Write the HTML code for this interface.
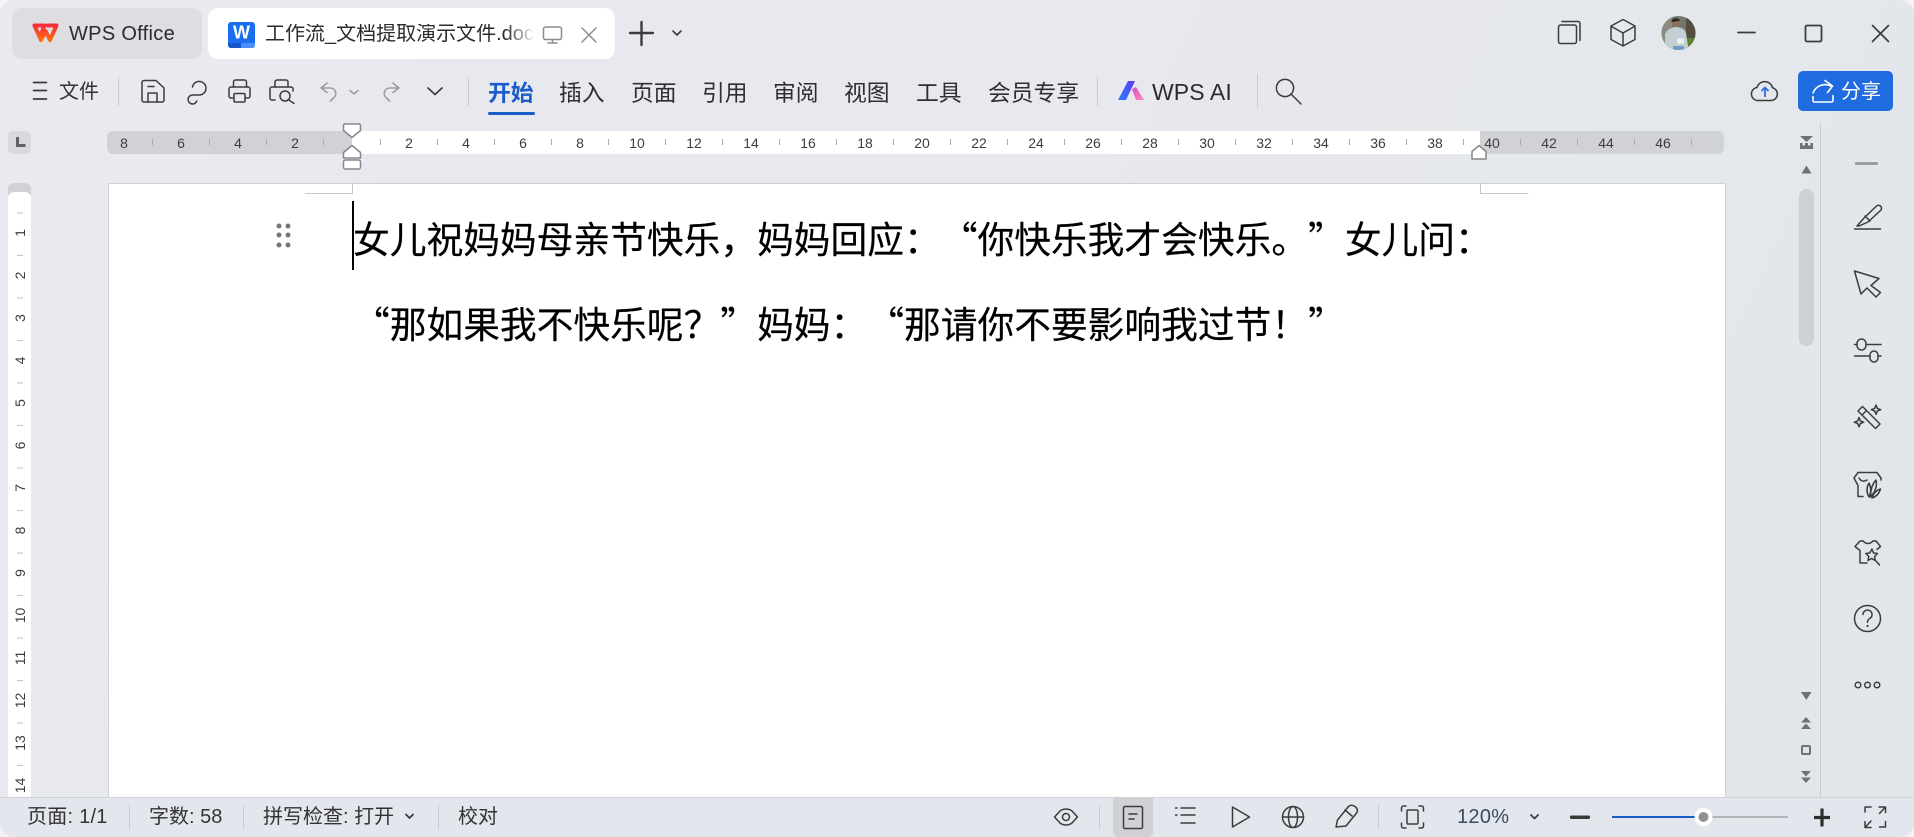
<!DOCTYPE html>
<html lang="zh-CN">
<head>
<meta charset="utf-8">
<title>工作流_文档提取演示文件.docx</title>
<style>
html,body{margin:0;padding:0;width:1914px;height:837px;overflow:hidden;background:#f3f3f5}
#w{position:absolute;left:0;top:0;width:1914px;height:837px;border-radius:14px;overflow:hidden;background:linear-gradient(115deg,#e9e9ef 0%,#e8e9ee 45%,#e1e6ea 100%);font-family:"Liberation Sans","Noto Sans CJK SC",sans-serif;color:#333}
.a{position:absolute}
.t{position:absolute;white-space:nowrap;line-height:1;font-size:20px;color:#333}
.m{font-size:22.8px;color:#2f2f2f}
.doc{position:absolute;left:353px;white-space:pre;font-family:"Noto Sans CJK SC",sans-serif;font-size:36.74px;line-height:1;color:#000;text-spacing-trim:space-all;-webkit-text-stroke:.2px #000}
.s{position:absolute;width:1px;background:#c9cacf}
svg{position:absolute;left:0;top:0}
</style>
</head>
<body>
<div id="w">
  <!-- tabs -->
  <div class="a" style="left:12px;top:8px;width:190px;height:51px;border-radius:10px;background:#dddde2"></div>
  <div class="a" style="left:208px;top:8px;width:407px;height:51px;border-radius:10px;background:#fff"></div>
  <div class="t" style="left:69px;top:24px;font-size:20px;letter-spacing:.3px;color:#2b2b2b">WPS Office</div>
  <div class="t" style="left:265px;top:24px;color:#2b2b2b;width:269px;overflow:hidden">工作流_文档提取演示文件.docx</div>
  <div class="a" style="left:505px;top:20px;width:30px;height:30px;background:linear-gradient(90deg,rgba(255,255,255,0),#fff)"></div>

  <!-- ribbon text -->
  <div class="t" style="left:59px;top:82px">文件</div>
  <div class="t m" style="left:488px;top:82px;color:#1a5cc8;font-weight:700">开始</div>
  <div class="a" style="left:488px;top:112px;width:47px;height:3px;border-radius:2px;background:#1a5cc8"></div>
  <div class="t m" style="left:559px;top:82px">插入</div>
  <div class="t m" style="left:631px;top:82px">页面</div>
  <div class="t m" style="left:702px;top:82px">引用</div>
  <div class="t m" style="left:773px;top:82px">审阅</div>
  <div class="t m" style="left:844px;top:82px">视图</div>
  <div class="t m" style="left:916px;top:82px">工具</div>
  <div class="t m" style="left:988px;top:82px">会员专享</div>
  <div class="t" style="left:1152px;top:81px;font-size:23px;letter-spacing:.1px;color:#2b2b2b">WPS AI</div>
  <div class="s" style="left:118px;top:77px;height:29px"></div>
  <div class="s" style="left:468px;top:77px;height:29px"></div>
  <div class="s" style="left:1097px;top:77px;height:29px"></div>
  <div class="s" style="left:1257px;top:74px;height:34px"></div>

  <div class="a" style="left:1798px;top:71px;width:95px;height:40px;border-radius:5px;background:#1f6be0"></div>
  <div class="t" style="left:1841px;top:82px;color:#fff">分享</div>

  <!-- rulers -->
  <div class="a" style="left:8px;top:131px;width:23px;height:23px;border-radius:5px;background:#d8d9dc"></div>
  <div class="a" style="left:107px;top:131px;width:1617px;height:23px;border-radius:6px;background:#d1d2d6"></div>
  <div class="a" style="left:352px;top:131px;width:1128px;height:23px;background:#fff"></div>
  <div class="a" style="left:8px;top:183px;width:23px;height:40px;border-radius:6px 6px 0 0;background:#d1d2d6"></div>
  <div class="a" style="left:8px;top:192px;width:23px;height:605px;border-radius:6px 6px 0 0;background:#fff"></div>

  <!-- page -->
  <div class="a" style="left:108px;top:183px;width:1618px;height:614px;background:#fff;border:1px solid #cfd1d5;border-bottom:0;box-sizing:border-box"></div>
  <div class="doc" style="top:219px">女儿祝妈妈母亲节快乐，妈妈回应：“你快乐我才会快乐。”女儿问：</div>
  <div class="doc" style="top:304px">“那如果我不快乐呢？”妈妈：“那请你不要影响我过节！”</div>
  <div class="a" style="left:352px;top:201px;width:2px;height:69px;background:#000"></div>

  <!-- right panel sep, scrollbar -->
  <div class="s" style="left:1820px;top:123px;height:674px;background:#c8cbd0"></div>
  <div class="a" style="left:1799px;top:189px;width:15px;height:157px;border-radius:8px;background:#cdd0d4"></div>

  <!-- status bar -->
  <div class="a" style="left:0;top:797px;width:1914px;height:40px;background:#e3e6ec;border-top:1px solid #cfd2d7;box-sizing:border-box"></div>
  <div class="a" style="left:1113px;top:797px;width:40px;height:40px;border-radius:0 0 5px 5px;background:#cfd1d5"></div>
  <div class="t" style="left:27px;top:807px;letter-spacing:.25px">页面: 1/1</div>
  <div class="t" style="left:149px;top:807px">字数: 58</div>
  <div class="t" style="left:263px;top:807px">拼写检查: 打开</div>
  <div class="t" style="left:458px;top:807px">校对</div>
  <div class="t" style="left:1457px;top:807px;color:#3d4b60;letter-spacing:.3px">120%</div>
  <div class="s" style="left:129px;top:805px;height:24px"></div>
  <div class="s" style="left:243px;top:805px;height:24px"></div>
  <div class="s" style="left:438px;top:805px;height:24px"></div>
  <div class="s" style="left:1099px;top:805px;height:24px"></div>
  <div class="s" style="left:1378px;top:805px;height:24px"></div>

  <svg width="1914" height="837" viewBox="0 0 1914 837" xmlns="http://www.w3.org/2000/svg">
    <defs>
      <linearGradient id="wg" x1="0" y1="0" x2="0" y2="1"><stop offset="0" stop-color="#f5303a"/><stop offset="1" stop-color="#ff6a10"/></linearGradient>
      <linearGradient id="aig" x1="0" y1="1" x2="1" y2="0"><stop offset="0" stop-color="#2f7bff"/><stop offset="1" stop-color="#5a3df0"/></linearGradient>
      <linearGradient id="aip" x1="0" y1="0" x2="1" y2="1"><stop offset="0" stop-color="#d84ad8"/><stop offset="1" stop-color="#ff8fa8"/></linearGradient>
      <clipPath id="av"><circle cx="1678.500" cy="33" r="17"/></clipPath>
    </defs>

    <!-- WPS logo -->
    <path d="M34.500 25.500H44.500L41 34M34.500 25.500L41 40L45.500 31L50 40L56.500 25.500H47.500" fill="none" stroke="url(#wg)" stroke-width="4" stroke-linejoin="round" stroke-linecap="round"/>
    <!-- W icon -->
    <rect x="228" y="22" width="27" height="26" rx="3" fill="#1a6ef0"/>
    <path d="M228 43h27v2a3 3 0 0 1-3 3h-21a3 3 0 0 1-3-3z" fill="#1559c9"/>
    <path d="M241 43h14v2a3 3 0 0 1-3 3h-11z" fill="#4a8ff5"/>
    <text x="241.500" y="38.500" text-anchor="middle" font-family="Liberation Sans" font-weight="700" font-size="18" fill="#fff">W</text>

    <g fill="none" stroke="#8c8c8c" stroke-width="1.500" stroke-linecap="round">
      <rect x="543.500" y="27" width="18" height="12.500" rx="2"/>
      <path d="M552.500 39.500v3M548 43h9"/>
      <path d="M582 28L596 42M596 28L582 42"/>
    </g>

    <g fill="none" stroke="#3c3c3c" stroke-width="1.500" stroke-linecap="round" stroke-linejoin="round">
      <path d="M630 33h23M641.500 22v23" stroke-width="2.400"/>
      <path d="M673 31l4 4 4-4" stroke-width="1.600"/>
      <path d="M33.500 82.500h13M33.500 90.500h13M33.500 99h13" stroke-width="1.700"/>
      <!-- save -->
      <path d="M144 80.500h12l8 7.500v12a2 2 0 0 1-2 2h-18a2 2 0 0 1-2-2v-17.500a2 2 0 0 1 2-2z"/>
      <path d="M148 102v-9h9v9M148 86.500h6"/>
      <!-- p -->
      <path d="M192.500 87a6.800 6.800 0 1 1 6.800 8h-7a4.500 4.500 0 1 0 4.500 6"/>
      <!-- print -->
      <path d="M233.500 87v-5a2 2 0 0 1 2-2h9a2 2 0 0 1 2 2v5"/>
      <path d="M234 98h-3a2 2 0 0 1-2-2v-7a2 2 0 0 1 2-2h17a2 2 0 0 1 2 2v7a2 2 0 0 1-2 2h-3"/>
      <rect x="234" y="93.500" width="11" height="8.500" rx="1"/>
      <!-- preview -->
      <path d="M275 87v-5a2 2 0 0 1 2-2h9a2 2 0 0 1 2 2v5"/>
      <path d="M275 100h-3a2 2 0 0 1-2-2v-9a2 2 0 0 1 2-2h19a2 2 0 0 1 2 2v2"/>
      <circle cx="285" cy="96" r="5"/>
      <path d="M289 100l5 3.500"/>
      <!-- more chevron -->
      <path d="M428 88l7 6.500 7-6.500" stroke-width="1.700"/>
      <!-- search -->
      <circle cx="1285" cy="88" r="8.600"/>
      <path d="M1291.500 94.500L1301 104"/>
      <!-- win -->
      <rect x="1558.500" y="25" width="18" height="18.500" rx="2"/>
      <path d="M1562 21.500h16a2 2 0 0 1 2 2v17"/>
      <path d="M1623 19.500L1635 26V39.500L1623 46L1611 39.500V26zM1611.500 26.500L1623 33L1634.500 26.500M1623 33V46"/>
      <path d="M1738 32.500h17" stroke-width="1.700"/>
      <rect x="1805.500" y="25.500" width="16" height="16" rx="1.500" stroke-width="1.800"/>
      <path d="M1872.500 25.500L1888.500 41.500M1888.500 25.500L1872.500 41.500" stroke-width="1.700"/>
      <!-- cloud -->
      <path d="M1759 100.500h12a6.500 6.500 0 0 0 1.500-12.800a8 8 0 0 0-15.500-.2a6.500 6.500 0 0 0 2 13z"/>
    </g>
    <path d="M1765 97v-9M1761.500 91l3.500-3.500 3.500 3.500" fill="none" stroke="#2a6ee0" stroke-width="1.800"/>
    <g fill="none" stroke="#fff" stroke-width="1.600" stroke-linecap="round" stroke-linejoin="round">
      <path d="M1813 93a13 13 0 0 1 18-7M1825 80.500l7.500 5.500-5 6.500"/>
      <path d="M1813 96.500v4a1.500 1.500 0 0 0 1.500 1.500h17a1.500 1.500 0 0 0 1.500-1.500v-5"/>
    </g>
    <!-- undo / redo -->
    <g fill="none" stroke="#9d9d9f" stroke-width="1.600" stroke-linecap="round" stroke-linejoin="round">
      <path d="M327 83l-6 5 6 4.500M321.500 88h9a5.500 5.500 0 0 1 3 10l-3 3"/>
      <path d="M350 90.500l4 3.500 4-3.500" stroke-width="1.500"/>
      <path d="M393 83l6 5-6 4.500M398.500 88h-9a5.500 5.500 0 0 0-3 10l3 3"/>
    </g>

    <!-- AI logo -->
    <polygon points="1118,100 1128,81 1135,81 1126,100" fill="url(#aig)"/>
    <polygon points="1132,89 1136,87 1144,100 1136,100" fill="url(#aip)"/>

    <!-- avatar -->
    <g clip-path="url(#av)">
      <rect x="1660" y="14" width="38" height="38" fill="#75766a"/>
      <rect x="1660" y="14" width="12" height="38" fill="#8d8a80"/>
      <rect x="1686" y="16" width="12" height="22" fill="#554c40"/>
      <rect x="1686" y="38" width="12" height="14" fill="#5d7f32"/>
      <path d="M1665 52V34q3-6 10-7 9 0 11 6l3 19z" fill="#c3ced0"/>
      <circle cx="1675.500" cy="22.500" r="3.800" fill="#8f7058"/>
      <path d="M1671 21q4-5 9-1l-1 1-7 1z" fill="#2d2723"/>
      <rect x="1673" y="46" width="11" height="6" fill="#6f9cc4"/>
      <rect x="1677" y="38.500" width="7" height="5" fill="#f0f0f0"/>
    </g>

    <!-- ruler corner -->
    <path d="M17.500 137v8.500h8" fill="none" stroke="#5f6164" stroke-width="3"/>
    <!-- ruler h ticks -->
    <path d="M152.500 139v6M209.500 139v6M266.500 139v6M323.500 139v6M380.500 139v6M437.500 139v6M494.500 139v6M551.500 139v6M608.500 139v6M665.500 139v6M722.500 139v6M779.500 139v6M836.500 139v6M893.500 139v6M950.500 139v6M1007.500 139v6M1064.500 139v6M1121.500 139v6M1178.500 139v6M1235.500 139v6M1292.500 139v6M1349.500 139v6M1406.500 139v6M1463.500 139v6M1520.500 139v6M1577.500 139v6M1634.500 139v6M1691.500 139v6" stroke="#a9abae" stroke-width="1"/>
    <g font-family="Liberation Sans" font-size="14" fill="#3d3d3d" text-anchor="middle">
      <text x="124" y="148">8</text><text x="181" y="148">6</text><text x="238" y="148">4</text><text x="295" y="148">2</text>
      <text x="409" y="148">2</text><text x="466" y="148">4</text><text x="523" y="148">6</text><text x="580" y="148">8</text>
      <text x="637" y="148">10</text><text x="694" y="148">12</text><text x="751" y="148">14</text><text x="808" y="148">16</text>
      <text x="865" y="148">18</text><text x="922" y="148">20</text><text x="979" y="148">22</text><text x="1036" y="148">24</text>
      <text x="1093" y="148">26</text><text x="1150" y="148">28</text><text x="1207" y="148">30</text><text x="1264" y="148">32</text>
      <text x="1321" y="148">34</text><text x="1378" y="148">36</text><text x="1435" y="148">38</text><text x="1492" y="148">40</text>
      <text x="1549" y="148">42</text><text x="1606" y="148">44</text><text x="1663" y="148">46</text>
    </g>
    <!-- indent markers -->
    <g fill="#fff" stroke="#85878a" stroke-width="1.500" stroke-linejoin="round">
      <path d="M345 124h14a1.500 1.500 0 0 1 1.500 1.500v5L352 137.500l-8.500-7v-5a1.500 1.500 0 0 1 1.500-1.500z" />
      <path d="M352 145.500l8.500 7v5.500h-17v-5.500z"/>
      <rect x="343.500" y="160" width="17" height="9" rx="2"/>
      <path d="M1479 145.500l7 6v7.500h-14v-7.500z"/>
    </g>
    <!-- ruler v -->
    <path d="M17 213h6M17 255.500h6M17 298h6M17 340.500h6M17 383h6M17 425.500h6M17 468h6M17 510.500h6M17 553h6M17 595.500h6M17 638h6M17 680.500h6M17 723h6M17 765.500h6" stroke="#c0c2c5" stroke-width="1"/>
    <g font-family="Liberation Sans" font-size="14" fill="#3d3d3d" text-anchor="middle">
      <text transform="translate(25 233) rotate(-90)">1</text>
      <text transform="translate(25 275.500) rotate(-90)">2</text>
      <text transform="translate(25 318) rotate(-90)">3</text>
      <text transform="translate(25 360.500) rotate(-90)">4</text>
      <text transform="translate(25 403) rotate(-90)">5</text>
      <text transform="translate(25 445.500) rotate(-90)">6</text>
      <text transform="translate(25 488) rotate(-90)">7</text>
      <text transform="translate(25 530.500) rotate(-90)">8</text>
      <text transform="translate(25 573) rotate(-90)">9</text>
      <text transform="translate(25 615.500) rotate(-90)">10</text>
      <text transform="translate(25 658) rotate(-90)">11</text>
      <text transform="translate(25 700.500) rotate(-90)">12</text>
      <text transform="translate(25 743) rotate(-90)">13</text>
      <text transform="translate(25 785.500) rotate(-90)">14</text>
    </g>
    <!-- margin marks -->
    <path d="M305 193.500h47.500V183M1480.500 183v10.500h48" fill="none" stroke="#c6c7cb" stroke-width="1"/>
    <!-- drag handle -->
    <g fill="#777">
      <circle cx="279" cy="226" r="2.500"/><circle cx="288" cy="226" r="2.500"/>
      <circle cx="279" cy="235" r="2.500"/><circle cx="288" cy="235" r="2.500"/>
      <circle cx="279" cy="245" r="2.500"/><circle cx="288" cy="245" r="2.500"/>
    </g>

    <!-- scroll controls -->
    <g fill="#6f7275">
      <path d="M1800 136h13l-6.500 6zM1800 149v-6h2.500v2.500h2.500v-2.500h3v2.500h2.500v-2.500h2.500v6z"/>
      <path d="M1806.500 165.500l5 8h-10z"/>
      <path d="M1801 692h10.500l-5.250 8z"/>
      <path d="M1806 717l5 5.500h-10zM1806 723.500l5 5.500h-10z"/>
      <path d="M1801 771h10l-5 5.500zM1801 777.500h10l-5 5.500z"/>
    </g>
    <rect x="1802" y="746" width="8" height="8" rx="1" fill="none" stroke="#6f7275" stroke-width="2"/>

    <!-- right panel -->
    <rect x="1855" y="162" width="23" height="3" rx="1" fill="#9b9da1"/>
    <g fill="none" stroke="#3c3c3c" stroke-width="1.500" stroke-linecap="round" stroke-linejoin="round">
      <!-- pen -->
      <path d="M1854.500 229h26"/>
      <path d="M1857 226l7-8 12.500-12a3 3 0 0 1 4 4.500L1868 222 1859 226zM1865 216l5 5"/>
      <!-- cursor -->
      <path d="M1854.500 271L1879 278.500 1871 285.500 1880.500 292.500 1876 297 1867 288 1861 294z"/>
      <!-- sliders -->
      <path d="M1854.500 344.500h2.500M1866 344.500h15M1854.500 356h15.500M1878 356h3"/>
      <rect x="1857" y="339" width="9" height="11" rx="4.500"/>
      <rect x="1870" y="351" width="8" height="11" rx="4"/>
      <!-- wand -->
      <path d="M1858 411l4.500-4.500 17.500 17.500-4.500 4.500zM1862 415l4.500-4.500"/>
      <path d="M1876 405l1.300 3.400 3.400 1.300-3.400 1.300-1.300 3.400-1.300-3.400-3.400-1.300 3.400-1.300zM1859 417.500l1.300 3.400 3.400 1.300-3.400 1.300-1.300 3.400-1.300-3.400-3.400-1.300 3.400-1.300z"/>
      <!-- plant -->
      <path d="M1858 472.500h19l4 5.500v2M1858 472.500l-4 5.500 4 7.500v11h5M1859 478q3 5 8 2"/>
      <path d="M1869 497q-4-7 0-14 3.500 7 0 14zM1870.500 497q0-11 5.500-17 2 9-5.500 17zM1872 498q2-7 8.500-9-2 7-8.500 9z"/>
      <!-- shirt -->
      <path d="M1863 541h-3l-5 5.500 5 4V563h7M1873 541h3l4.500 5.500-3.500 3"/>
      <path d="M1863 541q5 5 10 0"/>
      <path d="M1872 549l1.500 4 4 .5-3 3 .8 4-3.800-2-3.500 2 .8-4-3-3 4-.5z"/>
      <path d="M1876 561l3.500 4"/>
      <!-- help -->
      <circle cx="1867.500" cy="618.500" r="13"/>
      <path d="M1863 614.500a4.500 4.500 0 1 1 7 3.800c-1.600 1-2.500 2-2.500 4"/>
      <!-- dots -->
      <circle cx="1858" cy="685" r="2.800"/><circle cx="1867.500" cy="685" r="2.800"/><circle cx="1877" cy="685" r="2.800"/>
    </g>
    <circle cx="1867.500" cy="626" r="1.100" fill="#3c3c3c"/>

    <!-- status icons -->
    <g fill="none" stroke="#3c3c3c" stroke-width="1.500" stroke-linecap="round" stroke-linejoin="round">
      <path d="M1054.500 817l6-6.500q5.500-3 11 0l6 6.500-6 6.500q-5.500 3-11 0z"/>
      <circle cx="1066" cy="817" r="3.500"/>
      <rect x="1123.500" y="806.500" width="19" height="22" rx="1.500"/>
      <path d="M1129 814h8M1129 819h5"/>
      <path d="M1175.500 808h1.500M1181 808h14M1181 815h14M1175.500 815h1.500M1181 823h14"/>
      <path d="M1232.500 807l17 10-17 10z"/>
      <circle cx="1293" cy="817" r="10.500"/>
      <ellipse cx="1293" cy="817" rx="4.500" ry="10.500"/>
      <path d="M1282.500 817h21"/>
      <path d="M1336 827l1.500-7 11-13.500q3-2.500 6.500 0t2 6L1346 826zM1345 810l7 6"/>
      <path d="M1401.500 811v-3a2 2 0 0 1 2-2h2.500M1419 806h2.500a2 2 0 0 1 2 2v3M1423.500 823v3a2 2 0 0 1-2 2h-2.500M1406 828h-2.500a2 2 0 0 1-2-2v-3"/>
      <rect x="1407" y="810" width="11" height="14" rx="1"/>
      <path d="M1531 815l3.500 3.500 3.500-3.500M406 814.500l3.500 3.500 3.500-3.500" stroke-width="1.800"/>
      <path d="M1865 812v-5h6M1879 807h6.500v5.500M1885.500 807l-6 6.500M1865 821.500v6h6M1865 827.500l6-6.500M1885.500 821.500v5.500h-6"/>
    </g>
    <rect x="1570" y="815.500" width="20" height="3.500" rx="1.200" fill="#3a3a3a"/>
    <path d="M1814 817.500h16M1822 808.500v18" stroke="#2e2e2e" stroke-width="3.200" fill="none"/>
    <rect x="1612" y="816" width="88" height="2" fill="#1a5cc8"/>
    <rect x="1703" y="816" width="85" height="2" fill="#b2b4b7"/>
    <circle cx="1703.500" cy="817" r="9" fill="#fff"/>
    <circle cx="1703.500" cy="817" r="5" fill="#8f9094"/>
  </svg>
</div>
</body>
</html>
